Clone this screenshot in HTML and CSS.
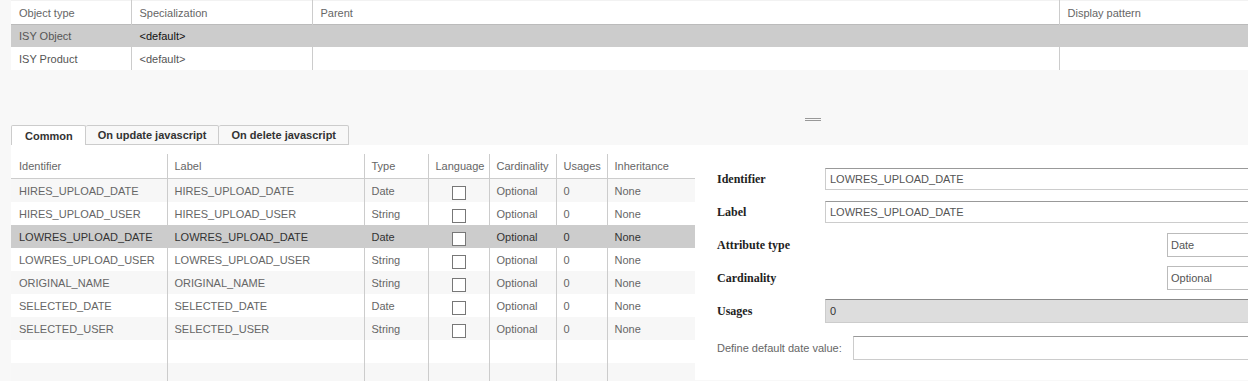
FILE: index.html
```html
<!DOCTYPE html>
<html>
<head>
<meta charset="utf-8">
<link rel="stylesheet" href="styles.css">
</head>
<body>
<div class="page">
  <table class="types">
    <colgroup>
      <col class="c-type"><col class="c-spec"><col class="c-parent"><col class="c-disp">
    </colgroup>
    <thead>
      <tr><th>Object type</th><th>Specialization</th><th>Parent</th><th>Display pattern</th></tr>
    </thead>
    <tbody>
      <tr class="sel"><td>ISY Object</td><td class="dark">&lt;default&gt;</td><td></td><td></td></tr>
      <tr><td>ISY Product</td><td>&lt;default&gt;</td><td></td><td></td></tr>
    </tbody>
  </table>

  <div class="splitter"><span class="grip"></span></div>

  <div class="tabs">
    <div class="tab active">Common</div>
    <div class="tab">On update javascript</div>
    <div class="tab">On delete javascript</div>
  </div>

  <div class="panel">
    <table class="attrs">
      <colgroup>
        <col class="a-id"><col class="a-label"><col class="a-type"><col class="a-lang"><col class="a-card"><col class="a-use"><col class="a-inh">
      </colgroup>
      <thead>
        <tr><th>Identifier</th><th>Label</th><th>Type</th><th>Language</th><th>Cardinality</th><th>Usages</th><th>Inheritance</th></tr>
      </thead>
      <tbody>
        <tr class="odd"><td>HIRES_UPLOAD_DATE</td><td>HIRES_UPLOAD_DATE</td><td>Date</td><td class="ck"><span class="box"></span></td><td>Optional</td><td>0</td><td>None</td></tr>
        <tr><td>HIRES_UPLOAD_USER</td><td>HIRES_UPLOAD_USER</td><td>String</td><td class="ck"><span class="box"></span></td><td>Optional</td><td>0</td><td>None</td></tr>
        <tr class="sel"><td>LOWRES_UPLOAD_DATE</td><td>LOWRES_UPLOAD_DATE</td><td>Date</td><td class="ck"><span class="box"></span></td><td>Optional</td><td>0</td><td>None</td></tr>
        <tr><td>LOWRES_UPLOAD_USER</td><td>LOWRES_UPLOAD_USER</td><td>String</td><td class="ck"><span class="box"></span></td><td>Optional</td><td>0</td><td>None</td></tr>
        <tr class="odd"><td>ORIGINAL_NAME</td><td>ORIGINAL_NAME</td><td>String</td><td class="ck"><span class="box"></span></td><td>Optional</td><td>0</td><td>None</td></tr>
        <tr><td>SELECTED_DATE</td><td>SELECTED_DATE</td><td>Date</td><td class="ck"><span class="box"></span></td><td>Optional</td><td>0</td><td>None</td></tr>
        <tr class="odd"><td>SELECTED_USER</td><td>SELECTED_USER</td><td>String</td><td class="ck"><span class="box"></span></td><td>Optional</td><td>0</td><td>None</td></tr>
        <tr><td></td><td></td><td></td><td></td><td></td><td></td><td></td></tr>
        <tr class="odd"><td></td><td></td><td></td><td></td><td></td><td></td><td></td></tr>
      </tbody>
    </table>

    <div class="form">
      <div class="row r1">
        <span class="lbl">Identifier</span>
        <div class="input">LOWRES_UPLOAD_DATE</div>
      </div>
      <div class="row r2">
        <span class="lbl">Label</span>
        <div class="input">LOWRES_UPLOAD_DATE</div>
      </div>
      <div class="row r3">
        <span class="lbl">Attribute type</span>
        <div class="select">Date</div>
      </div>
      <div class="row r4">
        <span class="lbl">Cardinality</span>
        <div class="select">Optional</div>
      </div>
      <div class="row r5">
        <span class="lbl">Usages</span>
        <div class="input ro">0</div>
      </div>
      <div class="row r6">
        <span class="plain">Define default date value:</span>
        <div class="input tall"></div>
      </div>
    </div>
  </div>
</div>
</body>
</html>
```

FILE: styles.css
```css
html, body {
  margin: 0;
  padding: 0;
  overflow: hidden;
  background: #f8f8f8;
}
body {
  width: 1248px;
  height: 381px;
  font-family: "Liberation Sans", Arial, sans-serif;
  font-size: 11px;
  color: #666;
}
.page {
  width: 1300px;
  padding-left: 11px;
}

/* top table */
.types {
  border-collapse: collapse;
  width: 1289px;
  table-layout: fixed;
  background: #fff;
  border-top: 1px solid #f2f2f2;
}
.c-type { width: 120px; }
.c-spec { width: 181px; }
.c-parent { width: 747px; }
.c-disp { width: 241px; }
.types th, .types td {
  text-align: left;
  font-weight: normal;
  padding: 0 8px;
  white-space: nowrap;
  border-left: 1px solid #ccc;
}
.types th:first-child, .types td:first-child { border-left: none; }
.types th { height: 23px; color: #666; }
.types td { height: 23px; color: #555; }
.types tr.sel td {
  background: #ccc;
  border-left-color: #ccc;
  border-top: 1px solid #bbb;
  height: 22px;
}
.types tr.sel td.dark { color: #111; }

/* splitter */
.splitter {
  height: 55px;
  display: flex;
  align-items: flex-start;
  padding-left: 794px;
}
.grip {
  margin-top: 48px;
  width: 16px;
  height: 1px;
  border-top: 1px solid #999;
  border-bottom: 1px solid #999;
}

/* tabs */
.tabs {
  display: flex;
  height: 20px;
  align-items: flex-end;
}
.tab {
  height: 18px;
  line-height: 18px;
  padding: 0 12px;
  font-weight: bold;
  color: #333;
  background: #f8f8f8;
  border: 1px solid #ccc;
  border-left: none;
  border-radius: 2px 2px 0 0;
}
.tab:first-child { border-left: 1px solid #ccc; }
.tab.active {
  background: #fff;
  height: 19px;
  line-height: 20px;
  border-bottom: none;
  padding: 0 12px 0 13px;
}

/* panel */
.panel {
  background: #fff;
  height: 235px;
  display: flex;
  align-items: flex-start;
  padding-top: 9px;
  box-sizing: border-box;
}

.attrs {
  border-collapse: collapse;
  table-layout: fixed;
  width: 684px;
  flex: none;
}
.a-id { width: 156px; }
.a-label { width: 197px; }
.a-type { width: 64px; }
.a-lang { width: 61px; }
.a-card { width: 67px; }
.a-use { width: 51px; }
.a-inh { width: 88px; }
.attrs th, .attrs td {
  text-align: left;
  font-weight: normal;
  padding: 0 7px;
  white-space: nowrap;
  border-left: 1px solid #ccc;
  height: 23px;
  color: #666;
}
.attrs th:first-child, .attrs td:first-child { border-left: none; padding-left: 8px; }
.attrs th { height: 24px; border-bottom: 1px solid #ccc; }
.attrs tr.odd td { background: #f7f7f7; }
.attrs tr.sel td {
  background: #ccc;
  color: #333;
  border-left-color: #ccc;
}
.attrs td.ck { text-align: center; padding: 0; }
.box {
  display: inline-block;
  width: 12px;
  height: 12px;
  border: 1px solid #777;
  background: #fff;
  vertical-align: middle;
  margin-top: 4px;
}

/* form */
.form {
  margin-left: 22px;
  margin-top: 14px;
  width: 573px;
  display: flex;
  flex-direction: column;
}
.row {
  display: flex;
  align-items: center;
  min-height: 22px;
}
.r2 { margin-top: 11px; }
.r3 { margin-top: 10px; }
.r4 { margin-top: 9px; }
.r5 { margin-top: 9px; }
.r6 { margin-top: 13px; }
.lbl {
  width: 108px;
  flex: none;
  font-family: "Liberation Serif", "Times New Roman", serif;
  font-weight: bold;
  font-size: 12px;
  color: #222;
}
.plain {
  flex: none;
  width: 136px;
  color: #666;
}
.input {
  flex: 1;
  height: 22px;
  box-sizing: border-box;
  border: 1px solid #ccc;
  border-top-color: #999;
  padding: 0 4px;
  line-height: 20px;
  color: #555;
  background: #fff;
}
.input.ro {
  background: #ddd;
  border-color: #ccc;
  border-top-color: #888;
  color: #333;
  height: 24px;
  line-height: 22px;
}
.input.tall { height: 24px; }
.select {
  margin-left: auto;
  width: 123px;
  height: 24px;
  box-sizing: border-box;
  border: 1px solid #bbb;
  padding: 0 3px;
  line-height: 22px;
  color: #555;
  background: #fff;
}
```
